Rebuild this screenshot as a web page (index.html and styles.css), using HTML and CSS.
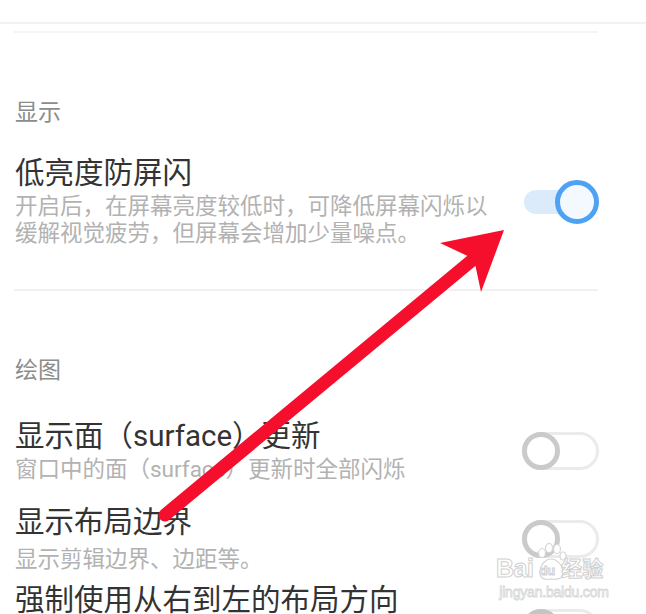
FILE: index.html
```html
<!DOCTYPE html>
<html lang="zh-CN">
<head>
    <meta charset="UTF-8">
    <meta name="viewport" content="width=device-width, initial-scale=1.0">
    <title>开发者选项</title>
    <link rel="stylesheet" href="styles.css">
</head>
<body>

    <main class="screen">
        <div class="topbar"></div>
        <div class="divider divider-top"></div>

        <section class="group">
            <h2 class="group-title">显示</h2>
            <div class="row row-first">
                <div class="row-text">
                    <div class="row-title">低亮度防屏闪</div>
                    <div class="row-desc">开启后，在屏幕亮度较低时，可降低屏幕闪烁以<br>缓解视觉疲劳，但屏幕会增加少量噪点。</div>
                </div>
                <span class="switch on"><span class="knob"></span></span>
            </div>
        </section>

        <div class="divider divider-mid"></div>

        <section class="group">
            <h2 class="group-title">绘图</h2>
            <div class="row row-surface">
                <div class="row-text">
                    <div class="row-title">显示面（surface）更新</div>
                    <div class="row-desc">窗口中的面（surface）更新时全部闪烁</div>
                </div>
                <span class="switch"><span class="knob"></span></span>
            </div>
            <div class="row row-bounds">
                <div class="row-text">
                    <div class="row-title">显示布局边界</div>
                    <div class="row-desc desc-tight">显示剪辑边界、边距等。</div>
                </div>
                <span class="switch"><span class="knob"></span></span>
            </div>
            <div class="row row-rtl">
                <div class="row-text">
                    <div class="row-title title-last">强制使用从右到左的布局方向</div>
                </div>
                <span class="switch switch-cut"><span class="knob"></span></span>
            </div>
        </section>

        <!-- annotation arrow drawn over the screenshot -->
        <svg class="arrow" width="646" height="614" viewBox="0 0 646 614" xmlns="http://www.w3.org/2000/svg">
            <line x1="165" y1="515" x2="476" y2="257" stroke="#f50f2c" stroke-width="13" stroke-linecap="round"/>
            <polygon points="504,230 440,243 474,259 481,292" fill="#f50f2c"/>
        </svg>

        <div class="watermark">
            <svg class="paw" width="34" height="40" viewBox="0 0 34 40" xmlns="http://www.w3.org/2000/svg">
                <g fill="#fff" stroke="#d6d6d6" stroke-width="1.2">
                    <ellipse cx="8" cy="10" rx="3.5" ry="4.5"/>
                    <ellipse cx="15" cy="5" rx="3.5" ry="4.5"/>
                    <ellipse cx="23" cy="6" rx="3.5" ry="4.5"/>
                    <ellipse cx="29" cy="13" rx="3" ry="4"/>
                    <path d="M6 30 C6 20 13 16 17 16 C22 16 29 21 29 30 C29 36 22 37 17 36 C11 37 6 36 6 30 Z"/>
                </g>
            </svg>
            <div class="wm-logo"><span class="wm-bai">Bai</span><span class="wm-du">du</span><span class="wm-jy">经验</span></div>
            <div class="wm-url">jingyan.baidu.com</div>
        </div>
    </main>

</body>
</html>
```

FILE: styles.css
```css
:root {
    --title-color: #333333;
    --desc-color: #b2b2b2;
    --group-color: #8c8c8c;
    --line-color: #f1f1f1;
    --accent: #4da2f4;
    --accent-soft: #dcebfb;
    --off-color: #cacaca;
    --off-track: #ebebeb;
}

* {
    box-sizing: border-box;
    margin: 0;
    padding: 0;
}

body {
    font-family: Roboto, "Noto Sans CJK SC", sans-serif;
    background-color: #ffffff;
    color: var(--title-color);
    overflow: hidden;
}

.screen {
    position: relative;
    width: 646px;
    height: 614px;
    overflow: hidden;
}

.topbar {
    height: 24px;
    border-bottom: 2px solid #f2f2f2;
}

.divider {
    height: 2px;
    background-color: var(--line-color);
    margin-left: 14px;
    margin-right: 48px;
}

.divider-top {
    margin-top: 7px;
    background-color: #f5f5f5;
}

.divider-mid {
    margin-top: 42px;
}

.group {
    padding-left: 15px;
    padding-right: 47px;
}

.group-title {
    font-size: 23px;
    font-weight: 400;
    line-height: 30px;
    color: var(--group-color);
    margin-top: 65px;
}

.row {
    display: flex;
    align-items: center;
    gap: 16px;
}

.row-first {
    margin-top: 28px;
}

.row-surface {
    margin-top: 33px;
}

.row-bounds {
    margin-top: 22px;
}

.row-rtl {
    align-items: flex-start;
    margin-top: 14px;
}

.row-text {
    flex: 1;
    min-width: 0;
}

.row-title {
    font-size: 29.5px;
    line-height: 34px;
    color: var(--title-color);
    white-space: nowrap;
}

.title-last {
    line-height: 26px;
}

.row-desc {
    font-size: 22.5px;
    line-height: 27px;
    color: var(--desc-color);
    margin-top: 3px;
    white-space: nowrap;
}

.desc-tight {
    margin-top: 7px;
}

/* switches */
.switch {
    position: relative;
    flex-shrink: 0;
    display: flex;
    align-items: center;
    width: 77px;
    height: 38px;
    border: 3px solid var(--off-track);
    border-radius: 19px;
}

.switch .knob {
    position: absolute;
    left: -3px;
    top: -3px;
    width: 38px;
    height: 38px;
    border: 5px solid var(--off-color);
    border-radius: 50%;
    background-color: #ffffff;
}

.switch.on {
    width: 75px;
    height: 44px;
    border: none;
    border-radius: 0;
}

.switch.on::before {
    content: "";
    width: 50px;
    height: 24px;
    border-radius: 12px;
    background-color: var(--accent-soft);
}

.switch.on .knob {
    left: auto;
    right: 0;
    top: 0;
    width: 44px;
    height: 44px;
    border-color: var(--accent);
    background-color: #f4f9ff;
}

.switch-cut {
    margin-top: 22px;
}

.switch-cut .knob {
    background-color: #ededed;
    border-color: #c4c4c4;
}

.arrow {
    position: absolute;
    left: 0;
    top: 0;
    pointer-events: none;
}

/* baidu watermark */
.watermark {
    position: absolute;
    left: 496px;
    top: 541px;
    width: 116px;
    font-family: "Liberation Sans", "Noto Sans CJK SC", sans-serif;
    color: #ffffff;
    pointer-events: none;
}

.paw {
    position: absolute;
    left: 38px;
    top: 2px;
}

.wm-logo {
    position: relative;
    margin-top: 15px;
    display: flex;
    align-items: flex-end;
    line-height: 24px;
    -webkit-text-stroke: 1px #d0d0d0;
}

.wm-bai {
    font-size: 25px;
    font-weight: 700;
    letter-spacing: -0.5px;
}

.wm-du {
    font-size: 13px;
    font-weight: 700;
    line-height: 18px;
    margin-left: 6px;
    margin-right: 6px;
}

.wm-jy {
    font-size: 21px;
    font-weight: 700;
    line-height: 22px;
}

.wm-url {
    font-size: 14px;
    line-height: 16px;
    margin-top: 4px;
    text-align: center;
    letter-spacing: -0.2px;
    -webkit-text-stroke: 0.8px #d6d6d6;
}
```
